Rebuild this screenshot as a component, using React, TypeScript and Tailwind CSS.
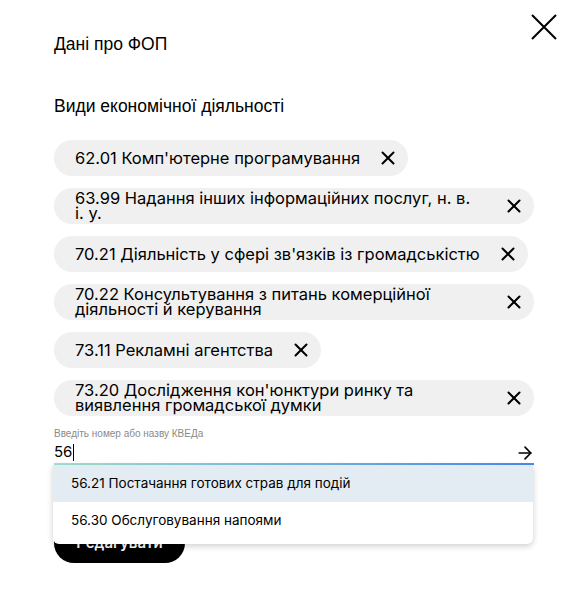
import { X, ArrowRight } from "lucide-react";

const chips = [
  "62.01 Комп'ютерне програмування",
  "63.99 Надання інших інформаційних послуг, н. в. і.\u00a0у.",
  "70.21 Діяльність у сфері зв'язків із громадськістю",
  "70.22 Консультування з питань комерційної діяльності й керування",
  "73.11 Рекламні агентства",
  "73.20 Дослідження кон'юнктури ринку та виявлення громадської думки",
];

const options = [
  "56.21 Постачання готових страв для подій",
  "56.30 Обслуговування напоями",
];

export default function App() {
  return (
    <div className="relative min-h-[592px] w-[585px] bg-white text-black">
      <button className="absolute right-[27px] top-[13px] h-[28px] w-[28px]">
        <svg viewBox="0 0 28 28" className="h-[28px] w-[28px]">
          <path d="M2 2 L26 26 M26 2 L2 26" stroke="black" strokeWidth="2" />
        </svg>
      </button>

      <div className="px-[54px] pt-[32px]">
        <h2 className="font-['Liberation_Sans',sans-serif] text-[17.5px] leading-[24px]">Дані про ФОП</h2>
        <h3 className="mt-[38px] font-['Liberation_Sans',sans-serif] text-[17.5px] leading-[24px]">
          Види економічної діяльності
        </h3>

        <div className="mt-[22px] flex w-[480px] flex-col items-start gap-[12px] font-['Inter',sans-serif]">
          {chips.map((c) => (
            <div
              key={c}
              className="flex h-[36px] max-w-[480px] items-center rounded-full bg-[#f0f0f0] pl-[21px] pr-[9px]"
            >
              <span className="min-w-0 flex-1 text-[16.5px] leading-[15px]">{c}</span>
              <X className="ml-[17px] h-[22px] w-[22px] shrink-0" strokeWidth={2.2} />
            </div>
          ))}
        </div>

        <div className="mt-[12px] w-[480px]">
          <div className="relative">
            <div className="font-['Liberation_Sans',sans-serif] text-[10px] leading-[12px] text-[#8a8a8a]">
              Введіть номер або назву КВЕДа
            </div>
            <div className="mt-[2px] flex h-[21px] items-center justify-between">
              <span className="flex items-center font-['Inter',sans-serif] text-[15px]">
                56<span className="ml-px inline-block h-[17px] w-px bg-black" />
              </span>
              <ArrowRight className="-mr-[1px] h-[20px] w-[20px]" strokeWidth={2} />
            </div>
            <div className="h-[2px] w-full bg-gradient-to-r from-[#a6e4cf] to-[#4a8cf3]" />

            <div className="absolute left-[-1px] top-full z-10 w-[480px] overflow-hidden rounded-b-[6px] bg-white pb-[5px] font-['Inter',sans-serif] text-[13.5px] shadow-[0_2px_6px_rgba(0,0,0,0.2)]">
              <div className="flex h-[37px] items-center bg-[#e4ecf3] px-[18px]">{options[0]}</div>
              <div className="flex h-[37px] items-center px-[18px]">{options[1]}</div>
            </div>
          </div>

          <button className="mt-[58px] h-[40px] w-[131px] rounded-full bg-black font-['Inter',sans-serif] text-[15px] font-semibold text-white">
            Редагувати
          </button>
        </div>
      </div>
    </div>
  );
}
